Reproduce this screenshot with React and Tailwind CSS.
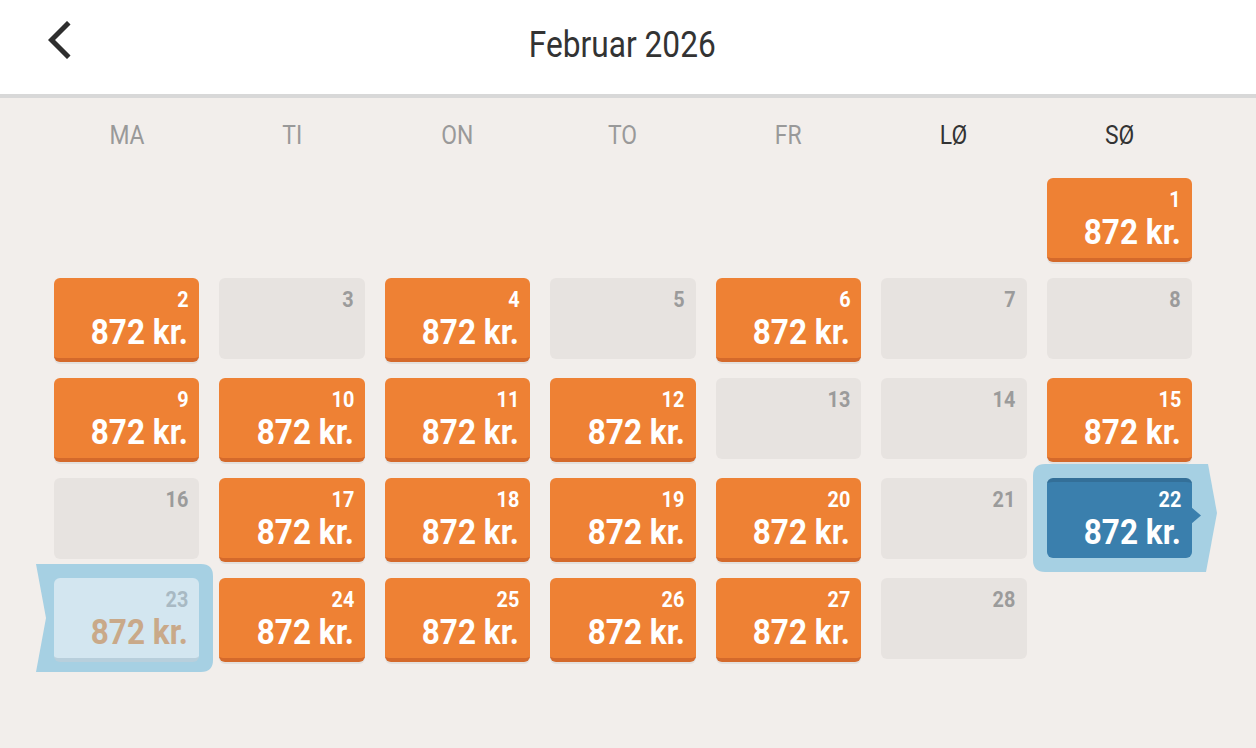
import React from 'react';

const orangeDays = [1, 2, 4, 6, 9, 10, 11, 12, 15, 17, 18, 19, 20, 24, 25, 26, 27];
const weekdays = ['MA', 'TI', 'ON', 'TO', 'FR', 'LØ', 'SØ'];

const DayCell = ({ day }) => {
  if (day === null) return <div className="h-[82px]" />;

  // valgt dag (blå, trykket ned)
  if (day === 22) {
    return (
      <div className="relative h-[82px]">
        <svg className="absolute left-[-14px] top-[-14px]" width="186" height="108" viewBox="0 0 186 108">
          <path d="M12 0 H175 L184 49 L173 108 H12 Q0 108 0 96 V12 Q0 0 12 0 Z" fill="#a6d0e3" />
        </svg>
        <div className="relative h-[80px] rounded-[6px] bg-[#3a7fad] border-t-4 border-[#336f98] flex flex-col items-end pr-[11px] pt-[7px] text-white">
          <DayText day={day} price="872 kr." />
        </div>
        <svg className="absolute right-[-10px] top-[29px]" width="11" height="17" viewBox="0 0 11 17">
          <path d="M0 0 L10 8.5 L0 17 Z" fill="#3a7fad" />
        </svg>
      </div>
    );
  }

  if (day === 23) {
    return (
      <div className="relative h-[82px]">
        <svg className="absolute left-[-18px] top-[-14px]" width="177" height="108" viewBox="0 0 177 108">
          <path d="M0 0 H165 Q177 0 177 12 V96 Q177 108 165 108 H0 L10 54 Z" fill="#a6d0e3" />
        </svg>
        <div className="relative h-[84px] rounded-[6px] bg-[#d3e6f0] border-b-4 border-[#b8cfdc] flex flex-col items-end pr-[11px] pt-[11px]">
          <DayText day={day} price="872 kr." numColor="text-[#a8b9c3]" priceColor="text-[#c9a989]" />
        </div>
      </div>
    );
  }

  if (orangeDays.includes(day)) {
    return (
      <div className="h-[84px] rounded-[6px] bg-[#ee8134] border-b-4 border-[#d4692b] shadow-[0_2px_0_rgba(0,0,0,0.06)] flex flex-col items-end pr-[11px] pt-[11px] text-white">
        <DayText day={day} price="872 kr." />
      </div>
    );
  }

  return (
    <div className="h-[81px] rounded-[6px] bg-[#e7e3e0] flex flex-col items-end pr-[11px] pt-[11px]">
      <DayText day={day} numColor="text-[#9b9b9b]" />
    </div>
  );
};

const DayText = ({ day, price, numColor = '', priceColor = '' }) => (
  <>
    <span className={`block origin-right scale-x-[0.9] text-[22px] leading-[22px] font-bold ${numColor}`}>{day}</span>
    {price && (
      <span className={`block origin-right scale-x-[0.9] mt-[4px] text-[35px] leading-[35px] font-bold whitespace-nowrap ${priceColor}`}>
        {price}
      </span>
    )}
  </>
);

export default function App() {
  // februar 2026 starter søndag
  const cells = [...Array(6).fill(null), ...Array.from({ length: 28 }, (_, i) => i + 1)];

  return (
    <div className="min-h-[748px] bg-[#f2eeeb] font-['Roboto',sans-serif]">
      {/* Header */}
      <div className="relative h-[98px] bg-white border-b-[4px] border-[#d8d8d8] flex items-center justify-center">
        <button className="absolute left-[44px] top-[17px] p-[4px]">
          <svg width="24" height="38" viewBox="0 0 24 38">
            <path d="M19 3.5 L3.5 19 L19 34.5" fill="none" stroke="#2e2e2e" strokeWidth="5" strokeLinecap="square" />
          </svg>
        </button>
        <h1 className="block scale-x-[0.88] text-[36px] leading-[36px] text-[#333] -mt-[4px] -ml-[12px]">Februar 2026</h1>
      </div>

      {/* Ugedage */}
      <div className="ml-[54px] w-[1138px] grid grid-cols-7 gap-x-[20px] pt-[24px] pb-[30px]">
        {weekdays.map((d, i) => (
          <div
            key={d}
            className={`text-center text-[26px] leading-[26px] ${i >= 5 ? 'text-[#333]' : 'text-[#999]'}`}
          >
            <span className="inline-block scale-x-[0.88]">{d}</span>
          </div>
        ))}
      </div>

      {/* Dage */}
      <div className="ml-[54px] w-[1138px] grid grid-cols-7 gap-x-[20px] gap-y-[16px] items-start">
        {cells.map((day, i) => (
          <DayCell key={i} day={day} />
        ))}
      </div>
    </div>
  );
}
